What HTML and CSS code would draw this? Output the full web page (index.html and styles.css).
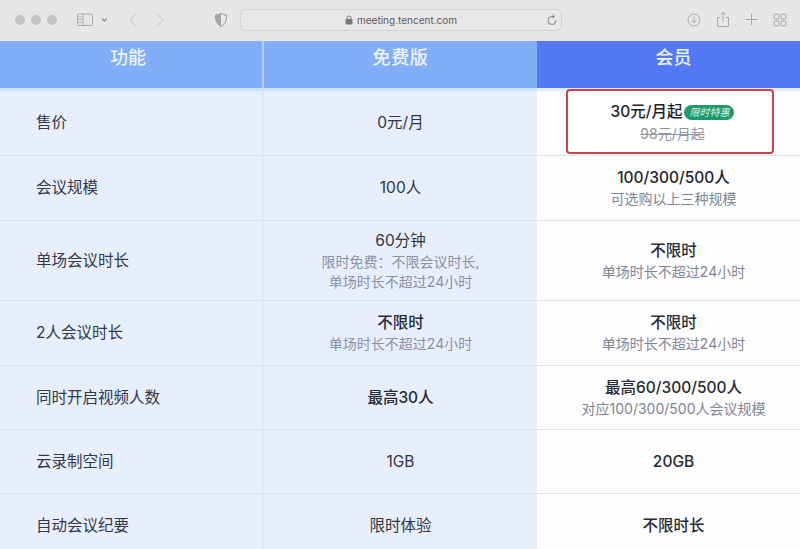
FILE: index.html
```html
<!DOCTYPE html>
<html lang="zh-CN">
<head>
<meta charset="utf-8">
<title>腾讯会议</title>
<link rel="stylesheet" href="styles.css">
</head>
<body>
<div class="page">
  <header class="toolbar">
    <div class="lights"><span class="light"></span><span class="light"></span><span class="light"></span></div>
    <svg class="icon sidebar" width="32" height="16" viewBox="0 0 32 16"><rect x="0.500" y="2" width="15" height="11.500" rx="1"/><path d="M6 2v11.500M1.500 5h3M1.500 7.500h3M1.500 10h3"/><path d="M25 6.500l2.500 2.500 2.500-2.500" class="bold"/></svg>
    <svg class="icon nav" width="18" height="16" viewBox="0 0 18 16"><path d="M12 2L6 8l6 6"/></svg>
    <svg class="icon nav nav-next" width="18" height="16" viewBox="0 0 18 16"><path d="M7 2l6 6-6 6"/></svg>
    <svg class="icon shield" width="14" height="16" viewBox="0 0 14 16"><path d="M7 1.500c2 1 3.500 1.300 5.500 1.500 0 5.500-1.500 9.500-5.500 11.500C3 12.500 1.500 8.500 1.500 3 3.500 2.800 5 2.500 7 1.500z"/><path class="fill" d="M7 1.500c-2 1-3.500 1.300-5.500 1.500 0 5.500 1.500 9.500 5.500 11.500z"/></svg>
    <div class="address">
      <span class="url"><svg class="lock" width="8" height="10" viewBox="0 0 8 10"><path class="shackle" d="M2 4.500V3a2 2 0 0 1 4 0v1.500"/><rect x="0.500" y="4" width="7" height="5.500" rx="1"/></svg>meeting.tencent.com</span>
      <svg class="icon reload" width="12" height="12" viewBox="0 0 12 12"><path d="M10 6.500A4 4 0 1 1 6 2.500h2M6.500 0.500L8.500 2.500 6.500 4.500"/></svg>
    </div>
    <div class="actions">
      <svg class="icon" width="14" height="14" viewBox="0 0 14 14"><circle cx="7" cy="7" r="6"/><path d="M7 3.500v6.500M4.500 7.500L7 10l2.500-2.500"/></svg>
      <svg class="icon" width="14" height="17" viewBox="0 0 14 17"><path d="M4 6.500H1.500v9h11v-9H10M7 11V1M4.500 3.500L7 1l2.500 2.500"/></svg>
      <svg class="icon" width="13" height="13" viewBox="0 0 13 13"><path d="M6.500 1v11M1 6.500h11"/></svg>
      <svg class="icon" width="14" height="14" viewBox="0 0 14 14"><rect x="1" y="1" width="5" height="5" rx="1"/><rect x="8" y="1" width="5" height="5" rx="1"/><rect x="1" y="8" width="5" height="5" rx="1"/><rect x="8" y="8" width="5" height="5" rx="1"/></svg>
    </div>
  </header>

  <div class="head">
    <div class="hcell hcell-name">功能</div>
    <div class="hcell hcell-free">免费版</div>
    <div class="hcell hcell-vip">会员</div>
  </div>
  <div class="strip"><span></span><span></span><span class="strip-vip"></span></div>

  <div class="table">
    <div class="row r65">
      <div class="cell name">售价</div>
      <div class="cell free"><b>0元/月</b></div>
      <div class="cell vip price">
        <div class="redbox">
          <div class="priceline"><b>30元/月起</b><span class="tag">限时特惠</span></div>
          <s class="old">98元/月起</s>
        </div>
      </div>
    </div>
    <div class="row r65">
      <div class="cell name">会议规模</div>
      <div class="cell free"><b>100人</b></div>
      <div class="cell vip"><b>100/300/500人</b><small>可选购以上三种规模</small></div>
    </div>
    <div class="row r80">
      <div class="cell name">单场会议时长</div>
      <div class="cell free"><b>60分钟</b><small>限时免费：不限会议时长,</small><small>单场时长不超过24小时</small></div>
      <div class="cell vip"><b class="strong">不限时</b><small>单场时长不超过24小时</small></div>
    </div>
    <div class="row r65">
      <div class="cell name">2人会议时长</div>
      <div class="cell free"><b class="strong">不限时</b><small>单场时长不超过24小时</small></div>
      <div class="cell vip"><b class="strong">不限时</b><small>单场时长不超过24小时</small></div>
    </div>
    <div class="row r64">
      <div class="cell name">同时开启视频人数</div>
      <div class="cell free"><b class="strong">最高30人</b></div>
      <div class="cell vip"><b class="strong">最高60/300/500人</b><small>对应100/300/500人会议规模</small></div>
    </div>
    <div class="row r64">
      <div class="cell name">云录制空间</div>
      <div class="cell free"><b>1GB</b></div>
      <div class="cell vip"><b class="strong">20GB</b></div>
    </div>
    <div class="row r64 last">
      <div class="cell name">自动会议纪要</div>
      <div class="cell free"><b>限时体验</b></div>
      <div class="cell vip"><b class="strong">不限时长</b></div>
    </div>
  </div>
</div>
</body>
</html>
```
FILE: styles.css
```css
* { box-sizing: border-box; }
html, body { margin: 0; padding: 0; }
body {
  width: 800px;
  height: 549px;
  overflow: hidden;
  font-family: "Inter", "Noto Sans CJK SC", sans-serif;
  color: #2c3340;
  background: #fdfdfe;
}
.page { width: 800px; height: 549px; overflow: hidden; display: flex; flex-direction: column; }

.toolbar {
  height: 41px;
  flex: none;
  display: flex;
  align-items: center;
  background: #e8e6e7;
  padding: 0 14px 2px 15px;
}
.lights { display: flex; gap: 6px; width: 62px; flex: none; }
.light { width: 10px; height: 10px; border-radius: 50%; background: #c5c3c5; }
.icon { flex: none; fill: none; stroke: #a9a8aa; stroke-width: 1; }
.sidebar { margin-right: 15px; }
.sidebar .bold { stroke-width: 1.300; stroke: #8f8e90; }
.nav { stroke: #d3d1d3; stroke-width: 1.200; margin-right: 8px; }
.nav-next { margin-right: 46px; }
.shield { stroke: #9b9a9c; margin-right: 12px; }
.shield .fill { fill: #a5a4a6; stroke: none; }
.address {
  width: 322px;
  height: 22px;
  flex: none;
  border: 1px solid #d4d2d4;
  border-radius: 6px;
  background: #e9e7e8;
  display: flex;
  align-items: center;
  position: relative;
  justify-content: center;
}
.url { font-family: "Inter", "Liberation Sans", sans-serif; font-size: 10px; color: #5c5b5e; display: flex; align-items: center; gap: 4px; }
.lock rect { fill: #77767a; }
.lock .shackle { fill: none; stroke: #77767a; }
.reload { position: absolute; right: 3px; top: 4px; stroke: #807f82; }
.actions { display: flex; align-items: center; gap: 15px; margin-left: auto; margin-right: -1px; padding-left: 2px; }

.head { display: grid; grid-template-columns: 264px 273px 263px; height: 47px; flex: none; }
.hcell {
  background: #82aef8;
  color: #eef5ff;
  font-size: 18px;
  line-height: 24px;
  font-weight: 500;
  display: flex;
  align-items: center;
  justify-content: center;
  padding-bottom: 14px;
  border-right: 2px solid #b4cdf9;
}
.hcell-name { padding-right: 6px; }
.hcell-free { letter-spacing: 0.700px; border-right: 0; }
.hcell-vip { background: #5579f4; border-right: 0; padding-left: 10px; }

.strip { display: grid; grid-template-columns: 264px 273px 263px; height: 3px; flex: none; }
.strip span { background: #cfdffc; }
.strip .strip-vip { background: #e4eafc; }

.table { flex: 1; display: flex; flex-direction: column; min-height: 0; }
.row { display: grid; grid-template-columns: 264px 273px 263px; grid-template-rows: minmax(0, 1fr); flex: none; border-bottom: 1px solid #dbe2ee; }
.r65 { height: 65px; }
.r80 { height: 80px; }
.r64 { height: 64px; }
.last { border-bottom: 0; }

.cell {
  display: flex;
  flex-direction: column;
  align-items: center;
  justify-content: center;
  font-size: 15.500px;
  line-height: 20px;
  background: #e8effc;
}
.cell.name { align-items: flex-start; padding-left: 36px; color: #30384a; border-right: 2px solid #e0e7f4; }
.cell.vip { background: #fdfdfe; padding-left: 10px; }
.cell b { font-weight: 400; color: #2f3542; line-height: 22px; }
.cell b.strong { font-weight: 500; color: #262b36; }
.vip b { font-weight: 500; color: #20242d; }
.cell small { font-size: 14px; line-height: 20px; color: #8a92a3; }
.cell.vip small { color: #7f8594; }

.cell.vip.price { padding: 0 0 0 2px; justify-content: flex-start; }
.redbox {
  width: 208px;
  height: 65px;
  flex: none;
  margin-top: -2px;
  padding: 2px 0 0 6px;
  border: 2px solid #c9444a;
  border-radius: 4px;
  background: #ffffff;
  display: flex;
  flex-direction: column;
  align-items: center;
  justify-content: center;
}
.priceline { display: flex; align-items: center; gap: 2px; }
.priceline b { font-weight: 500; color: #1d2129; }
.tag {
  font-size: 10px;
  line-height: 14px;
  height: 15px;
  padding: 0 5px;
  border-radius: 8px;
  background: #1f9a6a;
  color: #d8f3e4;
  font-style: italic;
}
.old { font-size: 14px; line-height: 21px; color: #8f95a1; }
```
